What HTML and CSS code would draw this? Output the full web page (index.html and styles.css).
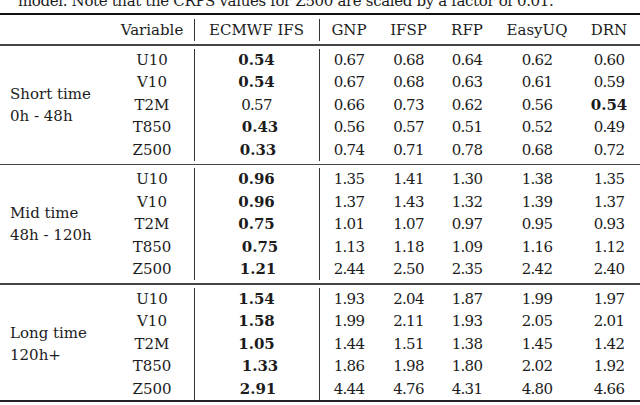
FILE: index.html
```html
<!DOCTYPE html>
<html>
<head>
<meta charset="utf-8">
<title>CRPS table</title>
<link rel="stylesheet" href="styles.css">
</head>
<body>
<div class="page">
  <p class="caption">model. Note that the CRPS values for Z500 are scaled by a factor of 0.01.</p>
  <table class="res">
    <colgroup>
      <col class="c-grp"><col class="c-var"><col class="c-ifs">
      <col class="c-gnp"><col class="c-ifsp"><col class="c-rfp"><col class="c-uq"><col class="c-drn">
    </colgroup>
    <tr class="pad"><td colspan="8"></td></tr>
    <tr class="head">
      <td></td><td>Variable</td><td class="vl">ECMWF IFS</td>
      <td class="vl">GNP</td><td>IFSP</td><td>RFP</td><td>EasyUQ</td><td>DRN</td>
    </tr>
    <tr class="sep"><td colspan="8"><div class="rule"></div></td></tr>

    <tr>
      <td class="grp" rowspan="5">Short time<br>0h - 48h</td>
      <td>U10</td><td class="vl"><b>0.54</b></td><td class="vl n">0.67</td><td class="n">0.68</td><td class="n">0.64</td><td class="n">0.62</td><td class="n">0.60</td>
    </tr>
    <tr><td>V10</td><td class="vl"><b>0.54</b></td><td class="vl n">0.67</td><td class="n">0.68</td><td class="n">0.63</td><td class="n">0.61</td><td class="n">0.59</td></tr>
    <tr><td>T2M</td><td class="vl n">0.57</td><td class="vl n">0.66</td><td class="n">0.73</td><td class="n">0.62</td><td class="n">0.56</td><td><b>0.54</b></td></tr>
    <tr><td>T850</td><td class="vl"><b class="sh">0.43</b></td><td class="vl n">0.56</td><td class="n">0.57</td><td class="n">0.51</td><td class="n">0.52</td><td class="n">0.49</td></tr>
    <tr><td>Z500</td><td class="vl"><b class="sh2">0.33</b></td><td class="vl n">0.74</td><td class="n">0.71</td><td class="n">0.78</td><td class="n">0.68</td><td class="n">0.72</td></tr>
    <tr class="sep"><td colspan="8"><div class="rule"></div></td></tr>

    <tr>
      <td class="grp" rowspan="5">Mid time<br>48h - 120h</td>
      <td>U10</td><td class="vl"><b>0.96</b></td><td class="vl n">1.35</td><td class="n">1.41</td><td class="n">1.30</td><td class="n">1.38</td><td class="n">1.35</td>
    </tr>
    <tr><td>V10</td><td class="vl"><b>0.96</b></td><td class="vl n">1.37</td><td class="n">1.43</td><td class="n">1.32</td><td class="n">1.39</td><td class="n">1.37</td></tr>
    <tr><td>T2M</td><td class="vl"><b>0.75</b></td><td class="vl n">1.01</td><td class="n">1.07</td><td class="n">0.97</td><td class="n">0.95</td><td class="n">0.93</td></tr>
    <tr><td>T850</td><td class="vl"><b class="sh">0.75</b></td><td class="vl n">1.13</td><td class="n">1.18</td><td class="n">1.09</td><td class="n">1.16</td><td class="n">1.12</td></tr>
    <tr><td>Z500</td><td class="vl"><b class="sh2">1.21</b></td><td class="vl n">2.44</td><td class="n">2.50</td><td class="n">2.35</td><td class="n">2.42</td><td class="n">2.40</td></tr>
    <tr class="sep"><td colspan="8"><div class="rule"></div></td></tr>

    <tr>
      <td class="grp" rowspan="5">Long time<br>120h+</td>
      <td>U10</td><td class="vl"><b>1.54</b></td><td class="vl n">1.93</td><td class="n">2.04</td><td class="n">1.87</td><td class="n">1.99</td><td class="n">1.97</td>
    </tr>
    <tr><td>V10</td><td class="vl"><b>1.58</b></td><td class="vl n">1.99</td><td class="n">2.11</td><td class="n">1.93</td><td class="n">2.05</td><td class="n">2.01</td></tr>
    <tr><td>T2M</td><td class="vl"><b>1.05</b></td><td class="vl n">1.44</td><td class="n">1.51</td><td class="n">1.38</td><td class="n">1.45</td><td class="n">1.42</td></tr>
    <tr><td>T850</td><td class="vl"><b class="sh">1.33</b></td><td class="vl n">1.86</td><td class="n">1.98</td><td class="n">1.80</td><td class="n">2.02</td><td class="n">1.92</td></tr>
    <tr><td>Z500</td><td class="vl"><b class="sh2">2.91</b></td><td class="vl n">4.44</td><td class="n">4.76</td><td class="n">4.31</td><td class="n">4.80</td><td class="n">4.66</td></tr>
  </table>
</div>
</body>
</html>
```

FILE: styles.css
```css
*{
	margin:0;
	padding:0;
	}
html, body{
	width:640px;
	height:405px;
	overflow:hidden;
	background:#fff;
	}
.page{
	width:640px;
	font-family:"DejaVu Serif", serif;
	font-size:15px;
	color:#1c1c1c;
	}
/* caption line is cut by the top edge, like the crop */
.caption{
	height:13px;
	line-height:2px;
	padding-left:18px;
	letter-spacing:-0.35px;
	white-space:nowrap;
	}
.res{
	width:640px;
	table-layout:fixed;
	border-collapse:separate;
	border-spacing:0;
	border-top:2px solid #111;
	border-bottom:2px solid #222;
	}
.c-grp{ width:110px }
.c-var{ width:84px }
.c-ifs{ width:125px }
.c-gnp{ width:60px }
.c-ifsp{ width:59px }
.c-rfp{ width:58px }
.c-uq{ width:82px }
.c-drn{ width:62px }

.res td{
	height:22.4px;
	line-height:22.4px;
	text-align:center;
	vertical-align:middle;
	white-space:nowrap;
	}
.res td.vl{
	box-shadow:inset 1px 0 0 #333;
	}
.res td.n{
	letter-spacing:-0.7px;
	}
.res .pad td{
	height:4px;
	line-height:4px;
	}
.res .sep td{
	height:7.5px;
	line-height:0;
	}
.rule{
	height:1.6px;
	background:#444;
	}
.res td.grp{
	text-align:left;
	padding-left:10px;
	line-height:22px;
	}
b{
	font-weight:bold;
	}
b.sh{ padding-left:7px }
b.sh2{ padding-left:3px }
```
